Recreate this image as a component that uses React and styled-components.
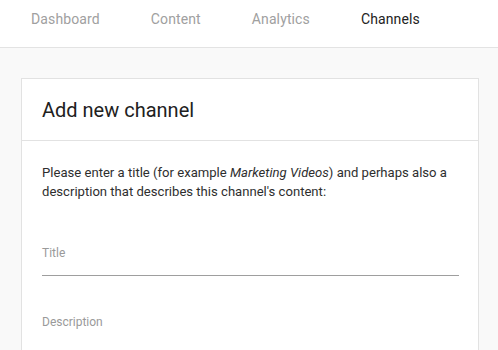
import React from "react";
import styled, { createGlobalStyle } from "styled-components";

const Global = createGlobalStyle`
  html, body {
    margin: 0;
    padding: 0;
    background: #f9f9f9;
    font-family: Roboto, "Liberation Sans", sans-serif;
  }
`;

const tabs = ["Dashboard", "Content", "Analytics", "Channels"];

function App() {
  return (
    <Page>
      <Global />
      <TopBar>
        {tabs.map((t) => (
          <Tab key={t} active={t === "Channels"}>
            {t}
          </Tab>
        ))}
      </TopBar>
      <Main>
        <Card>
          <CardHeader>
            <h2>Add new channel</h2>
          </CardHeader>
          <CardBody>
            <Intro>
              Please enter a title (for example <em>Marketing Videos</em>) and
              perhaps also a description that describes this channel's content:
            </Intro>
            <Field>
              <Label htmlFor="title">Title</Label>
              <Input id="title" type="text" />
            </Field>
            <Field gap={38}>
              <Label htmlFor="desc">Description</Label>
              <TextArea id="desc" rows={2} />
            </Field>
          </CardBody>
        </Card>
      </Main>
    </Page>
  );
}

export default App;

const Page = styled.div`
  height: 350px;
  overflow: hidden;
`;

const TopBar = styled.nav`
  display: flex;
  gap: 51px;
  height: 48px;
  box-sizing: border-box;
  padding: 9px 0 0 31px;
  background: #fff;
  border-bottom: 1px solid #e3e3e3;
`;

const Tab = styled.a`
  font-size: 14px;
  line-height: 20px;
  letter-spacing: 0.12px;
  color: ${(p) => (p.active ? "#222" : "#a0a0a0")};
  cursor: pointer;
`;

const Main = styled.main`
  padding: 30px 19px 0 21px;
`;

const Card = styled.section`
  background: #fff;
  border: 1px solid #e2e2e2;
`;

const CardHeader = styled.header`
  height: 61px;
  display: flex;
  align-items: center;
  padding: 0 20px;
  border-bottom: 1px solid #e2e2e2;

  h2 {
    margin: 0;
    font-size: 20px;
    font-weight: 400;
    color: #212121;
  }
`;

const CardBody = styled.div`
  padding: 22px 19px 20px 20px;
`;

const Intro = styled.p`
  margin: 0;
  font-size: 13.1px;
  line-height: 19px;
  color: #2e2e2e;

  em {
    font-style: italic;
  }
`;

const Field = styled.div`
  margin-top: ${(p) => p.gap ?? 44}px;
  display: flex;
  flex-direction: column;
`;

const Label = styled.label`
  font-size: 12px;
  line-height: 16px;
  color: #9a9a9a;
`;

const Input = styled.input`
  height: 14px;
  padding: 0;
  border: none;
  border-bottom: 1px solid #9e9e9e;
  outline: none;
  font: inherit;
`;

const TextArea = styled.textarea`
  padding: 0;
  border: none;
  border-bottom: 1px solid #9e9e9e;
  outline: none;
  resize: none;
  font: inherit;
`;
